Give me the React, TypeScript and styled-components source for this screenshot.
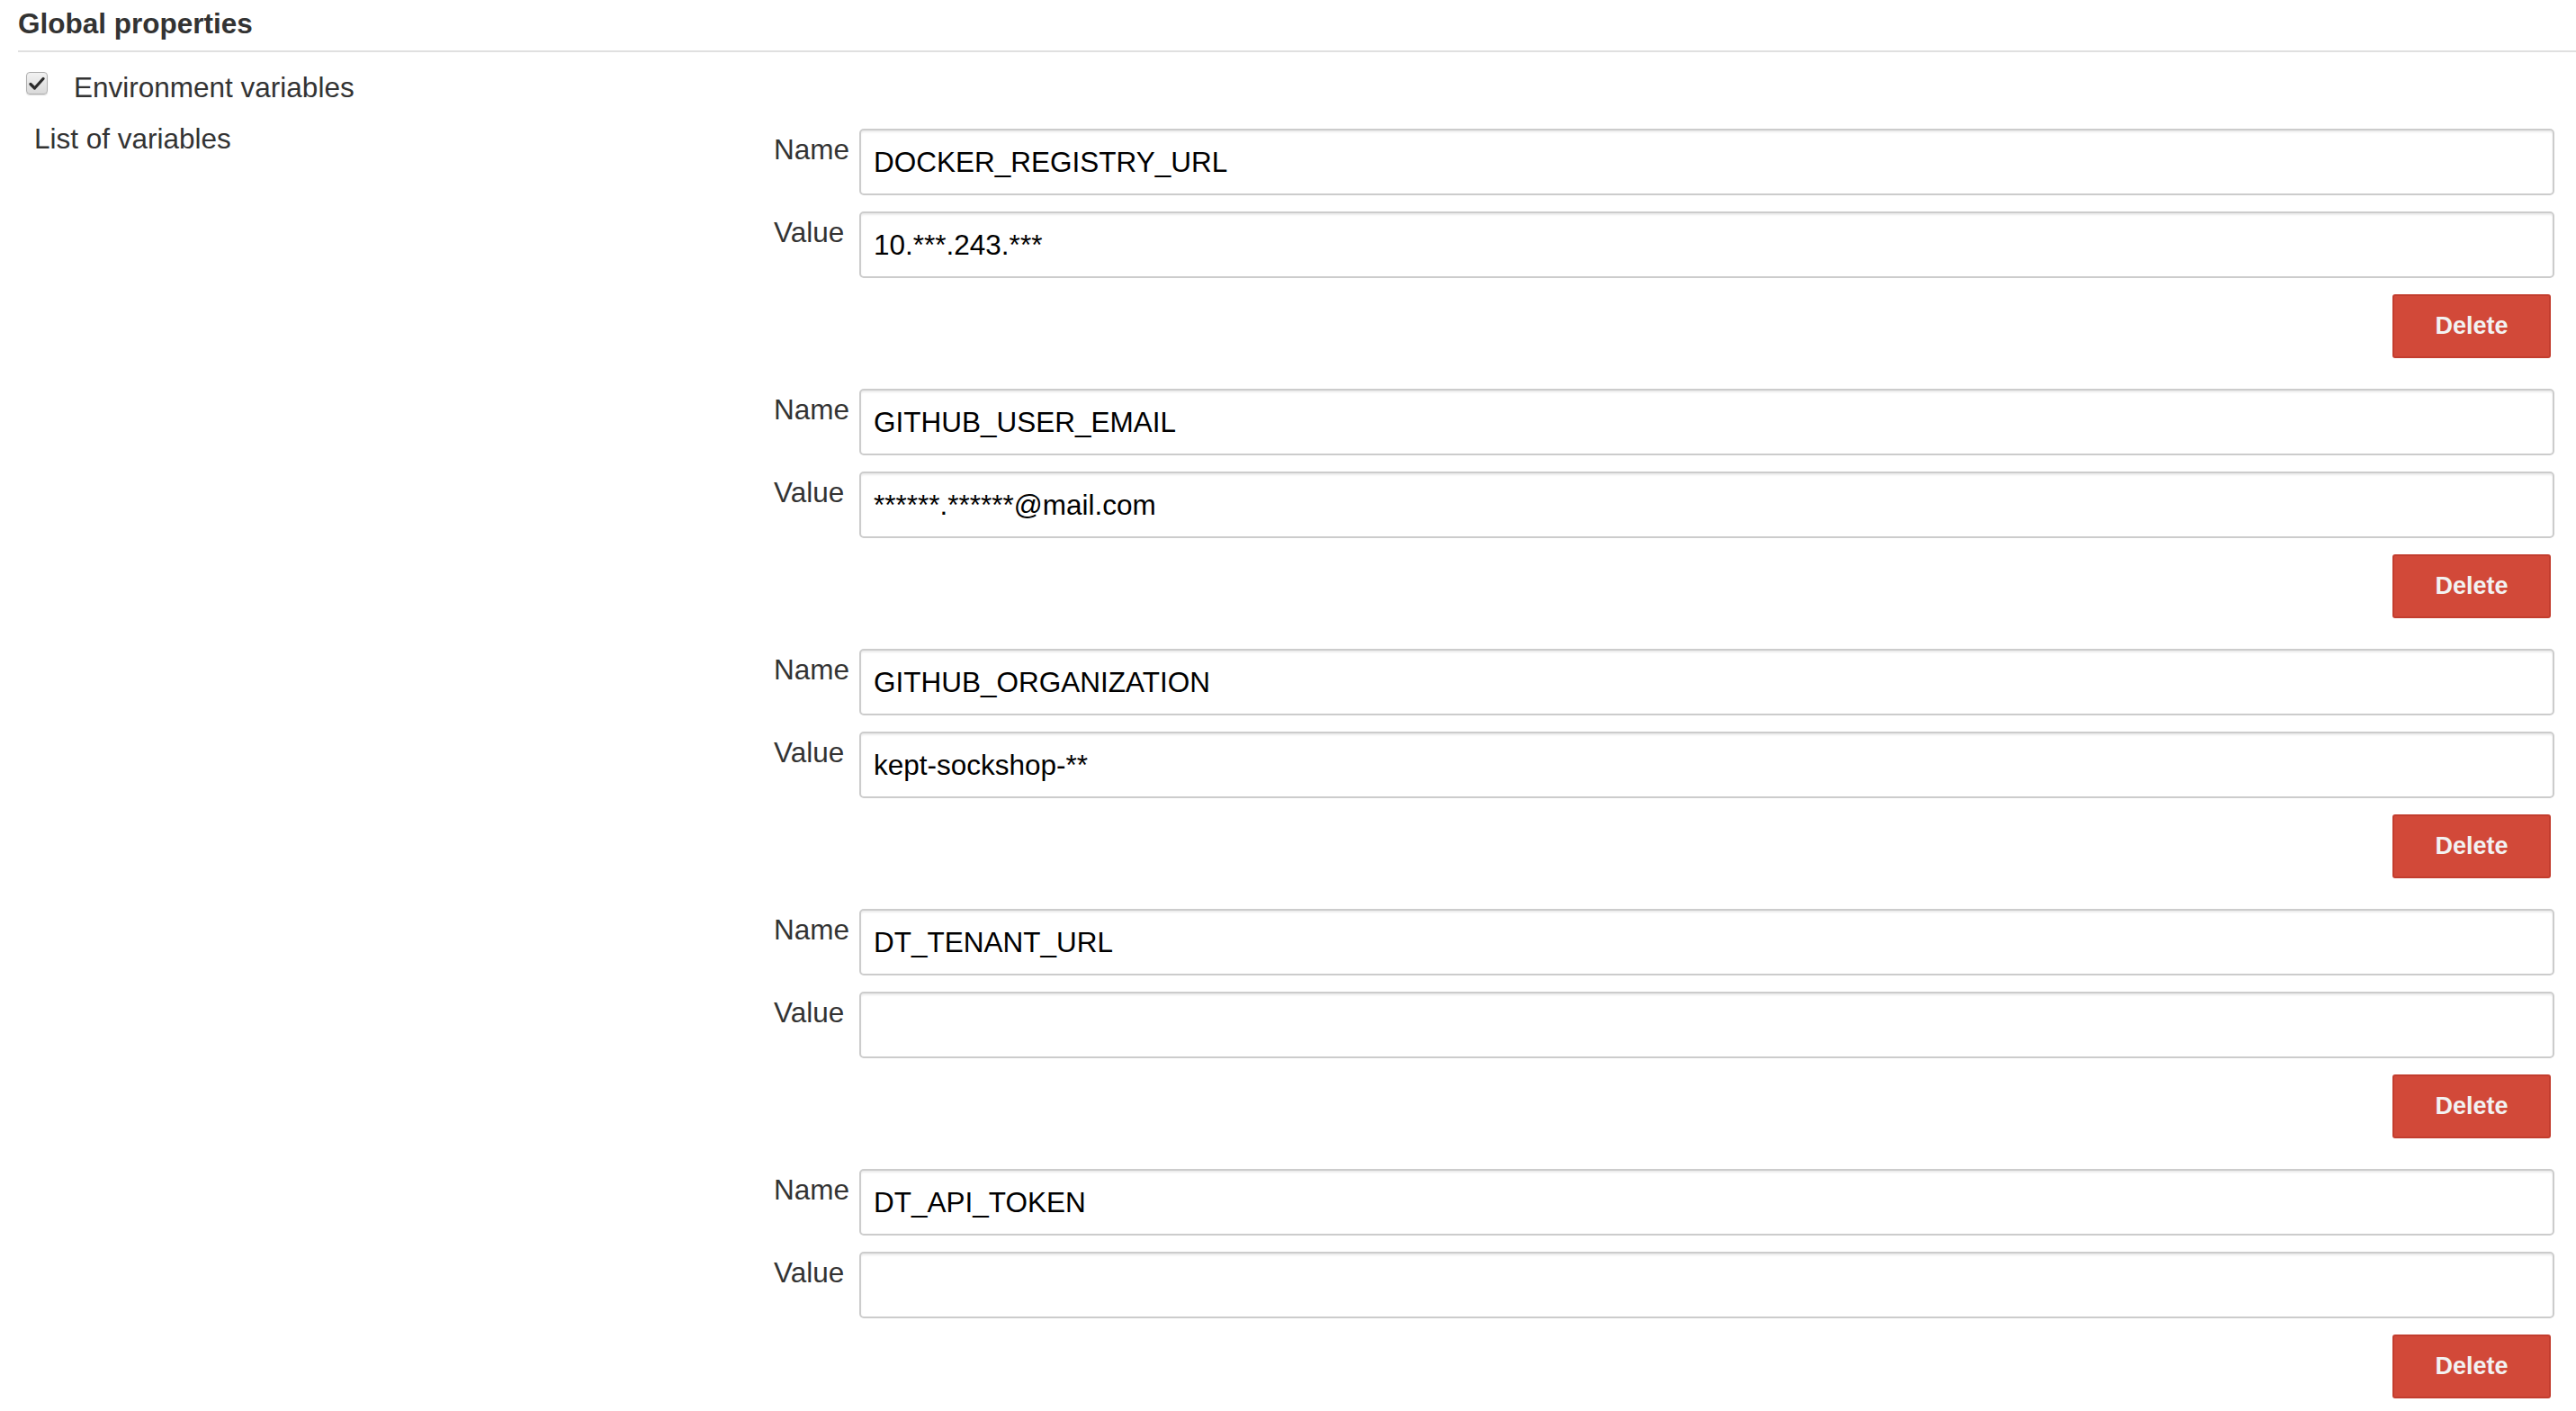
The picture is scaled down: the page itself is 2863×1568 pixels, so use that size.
import React from "react";
import styled, { createGlobalStyle } from "styled-components";

const GlobalStyle = createGlobalStyle`
  html, body { margin: 0; padding: 0; background: #fff; }
  body { font-family: "Liberation Sans", Arial, sans-serif; color: #333; }
  * { box-sizing: border-box; }
`;

const Page = styled.div`
  padding: 8px 24px 0 20px;
`;

const SectionHeader = styled.div`
  margin-right: -24px;
  padding-bottom: 11px;
  border-bottom: 2px solid #e0e0e0;
`;

const Heading = styled.h2`
  margin: 0;
  font-size: 31.5px;
  line-height: 37px;
  font-weight: bold;
  color: #333;
`;

const CheckRow = styled.label`
  display: flex;
  align-items: flex-start;
  margin-top: 20px;
  padding-left: 9px;
  gap: 29px;
  font-size: 31.5px;
  line-height: 38px;
  color: #333;
`;

const CheckBox = styled.span`
  width: 24px;
  height: 25px;
  margin-top: 2px;
  border: 1.5px solid #b0b0b0;
  border-radius: 4px;
  background: linear-gradient(#f2f2f2, #d9d9d9);
  box-shadow: 0 1px 1px rgba(0, 0, 0, 0.15);
  display: flex;
  align-items: center;
  justify-content: center;
`;

const VariablesRow = styled.div`
  display: grid;
  grid-template-columns: 840px 1fr;
  margin-top: 19px;
`;

const SideLabel = styled.div`
  padding-left: 18px;
  font-size: 31.5px;
  line-height: 38px;
  color: #333;
`;

const List = styled.div`
  display: flex;
  flex-direction: column;
  gap: 34px;
  padding-top: 8px;
`;

const VarBlock = styled.div`
  display: grid;
  grid-template-columns: 84px 1fr;
  column-gap: 11px;
  row-gap: 18px;
`;

const FieldLabel = styled.div`
  padding-top: 4px;
  font-size: 31.5px;
  line-height: 38px;
  color: #333;
  white-space: nowrap;
`;

const TextInput = styled.input`
  height: 74px;
  width: 100%;
  border: 2px solid #cccccc;
  border-radius: 5px;
  padding: 0 14px;
  font-family: "Liberation Sans", Arial, sans-serif;
  font-size: 31.5px;
  color: #000;
  background: #fff;
  box-shadow: inset 0 2px 2px rgba(0, 0, 0, 0.075);
  outline: none;
`;

const ButtonRow = styled.div`
  grid-column: 2;
  display: flex;
  justify-content: flex-end;
  padding-right: 4px;
`;

const DeleteButton = styled.button`
  width: 176px;
  height: 71px;
  border: 2px solid #c33d2e;
  border-radius: 3px;
  background: #d24939;
  color: #f2f2f2;
  font-family: "Liberation Sans", Arial, sans-serif;
  font-weight: bold;
  font-size: 27px;
  cursor: pointer;
`;

const vars = [
  { name: "DOCKER_REGISTRY_URL", value: "10.***.243.***" },
  { name: "GITHUB_USER_EMAIL", value: "******.******@mail.com" },
  { name: "GITHUB_ORGANIZATION", value: "kept-sockshop-**" },
  { name: "DT_TENANT_URL", value: "" },
  { name: "DT_API_TOKEN", value: "" },
];

export default function App() {
  return (
    <>
      <GlobalStyle />
      <Page>
        <SectionHeader>
          <Heading>Global properties</Heading>
        </SectionHeader>
        <CheckRow>
          <CheckBox>
            <svg width="18" height="16" viewBox="0 0 18 16">
              <path
                d="M2 8.5 L6.5 13 L16 2.5"
                fill="none"
                stroke="#2b2b2b"
                strokeWidth="3.2"
                strokeLinecap="round"
                strokeLinejoin="round"
              />
            </svg>
          </CheckBox>
          Environment variables
        </CheckRow>
        <VariablesRow>
          <SideLabel>List of variables</SideLabel>
          <List>
            {vars.map((v) => (
              <VarBlock key={v.name}>
                <FieldLabel>Name</FieldLabel>
                <TextInput defaultValue={v.name} />
                <FieldLabel>Value</FieldLabel>
                <TextInput defaultValue={v.value} />
                <ButtonRow>
                  <DeleteButton>Delete</DeleteButton>
                </ButtonRow>
              </VarBlock>
            ))}
          </List>
        </VariablesRow>
      </Page>
    </>
  );
}
